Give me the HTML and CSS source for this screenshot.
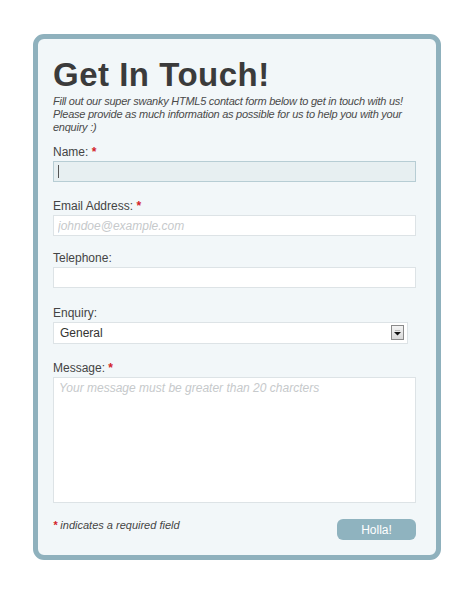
FILE: index.html
```html
<!DOCTYPE html>
<html>
<head>
<meta charset="utf-8">
<link rel="stylesheet" href="styles.css">
</head>
<body>
<form class="card">
  <h1 class="title">Get In Touch!</h1>
  <p class="intro">Fill out our super swanky HTML5 contact form below to get in touch with us! Please provide as much information as possible for us to help you with your enquiry :)</p>

  <div class="field field-name">
    <label class="label">Name: <span class="req">*</span></label>
    <div class="focus-wrap">
      <input class="input input-focus" type="text">
      <span class="caret"></span>
    </div>
  </div>

  <div class="field field-email">
    <label class="label">Email Address: <span class="req">*</span></label>
    <input class="input" type="text" placeholder="johndoe@example.com">
  </div>

  <div class="field field-tel">
    <label class="label">Telephone:</label>
    <input class="input" type="text">
  </div>

  <div class="field field-enquiry">
    <label class="label">Enquiry:</label>
    <div class="select-wrap">
      <select class="select">
        <option>General</option>
      </select>
      <span class="select-btn">
        <svg width="7" height="6" viewBox="0 0 7 6"><rect x="1" y="0" width="5" height="1" fill="#bbb"/><path d="M0 2h7L3.5 5.5z" fill="#111"/></svg>
      </span>
    </div>
  </div>

  <div class="field field-message">
    <label class="label">Message: <span class="req">*</span></label>
    <textarea class="textarea" placeholder="Your message must be greater than 20 charcters"></textarea>
  </div>

  <div class="footer">
    <p class="note"><span class="req">*</span> indicates a required field</p>
    <button class="submit" type="button">Holla!</button>
  </div>
</form>
</body>
</html>
```

FILE: styles.css
```css
html, body {
  margin: 0;
  padding: 0;
  background: #ffffff;
}

body {
  font-family: "Liberation Sans", Arial, sans-serif;
  color: #444444;
}

.card {
  box-sizing: border-box;
  width: 408px;
  height: 526px;
  margin: 34px 0 0 33px;
  padding: 19px 20px 15px 15px;
  background: #f2f7f9;
  border: 5px solid #8fb1bd;
  border-radius: 11px;
  display: flex;
  flex-direction: column;
}

.title {
  margin: 0;
  font-size: 33px;
  line-height: 33px;
  letter-spacing: 0.5px;
  font-weight: bold;
  color: #3b3b3b;
}

.intro {
  margin: 4px 0 0 0;
  font-size: 11px;
  line-height: 13px;
  letter-spacing: -0.25px;
  font-style: italic;
  color: #4a4a4a;
}

.field {
  display: flex;
  flex-direction: column;
}

.field-name { margin-top: 10px; }
.field-email { margin-top: 16px; }
.field-tel { margin-top: 14px; }
.field-enquiry { margin-top: 17px; }
.field-message { margin-top: 16px; }

.label {
  font-size: 12px;
  line-height: 16px;
  color: #444444;
  margin-bottom: 1px;
}

.req {
  color: #d2232a;
  font-weight: bold;
}

.input {
  box-sizing: border-box;
  width: 363px;
  height: 21px;
  margin: 0;
  padding: 0 4px;
  border: 1px solid #dde3e6;
  background: #ffffff;
  font-family: "Liberation Sans", Arial, sans-serif;
  font-size: 12px;
  color: #444;
  outline: none;
}

.input::placeholder,
.textarea::placeholder {
  color: #c6c9cb;
  font-style: italic;
}

.input-focus {
  background: #e7eff1;
  border-color: #b7cdd4;
}

.focus-wrap {
  position: relative;
  width: 363px;
  height: 21px;
}

.caret {
  position: absolute;
  left: 5px;
  top: 4px;
  width: 1px;
  height: 13px;
  background: #555;
}

.select-wrap {
  position: relative;
  width: 355px;
  height: 22px;
}

.select {
  box-sizing: border-box;
  width: 355px;
  height: 22px;
  margin: 0;
  padding: 0 6px;
  border: 1px solid #dde3e6;
  background: #ffffff;
  appearance: none;
  -webkit-appearance: none;
  font-family: "Liberation Sans", Arial, sans-serif;
  font-size: 12px;
  color: #333;
  outline: none;
}

.select-btn {
  position: absolute;
  right: 4px;
  top: 3px;
  box-sizing: border-box;
  width: 13px;
  height: 15px;
  border: 1px solid #8a8a8a;
  background: linear-gradient(#f4f4f4, #d9d9d9);
  display: flex;
  align-items: center;
  justify-content: center;
}

.textarea {
  box-sizing: border-box;
  width: 363px;
  height: 126px;
  margin: 0;
  padding: 3px 5px;
  border: 1px solid #dde3e6;
  background: #ffffff;
  font-family: "Liberation Sans", Arial, sans-serif;
  font-size: 12px;
  line-height: 15px;
  resize: none;
  outline: none;
}

.footer {
  display: flex;
  justify-content: space-between;
  align-items: flex-start;
  width: 363px;
  margin-top: 16px;
}

.note {
  margin: 0;
  font-size: 11px;
  line-height: 13px;
  font-style: italic;
  color: #444;
}

.submit {
  width: 79px;
  height: 21px;
  border: none;
  border-radius: 6px;
  background: #8fb3bf;
  color: #ffffff;
  font-family: "Liberation Sans", Arial, sans-serif;
  font-size: 12px;
  padding: 0;
}
```
